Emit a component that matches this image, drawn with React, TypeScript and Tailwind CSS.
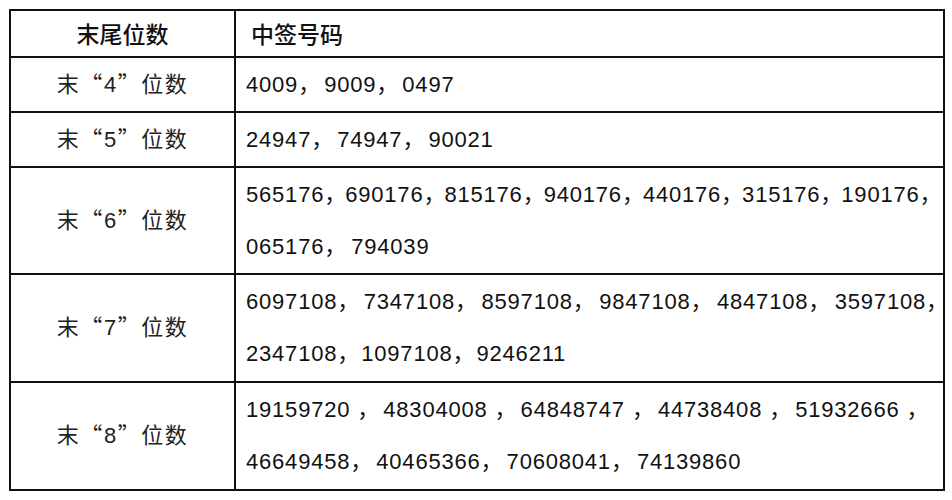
const cjk = "[font-family:'Noto_Sans_CJK_SC',sans-serif]";

type Row = {
  digit: string;
  h: string;
  lines: { nums: string[]; comma: string; trail?: string }[];
};

const rows: Row[] = [
  { digit: "4", h: "h-[55px]", lines: [{ nums: ["4009", "9009", "0497"], comma: "w-[26px]" }] },
  { digit: "5", h: "h-[55px]", lines: [{ nums: ["24947", "74947", "90021"], comma: "w-[26px]" }] },
  {
    digit: "6",
    h: "h-[107px]",
    lines: [
      {
        nums: ["565176", "690176", "815176", "940176", "440176", "315176", "190176"],
        comma: "w-[21px]",
        trail: "w-[12px]",
      },
      { nums: ["065176", "794039"], comma: "w-[27px]" },
    ],
  },
  {
    digit: "7",
    h: "h-[108px]",
    lines: [
      {
        nums: ["6097108", "7347108", "8597108", "9847108", "4847108", "3597108"],
        comma: "w-[26.5px]",
        trail: "w-[12px]",
      },
      { nums: ["2347108", "1097108", "9246211"], comma: "w-[24px]" },
    ],
  },
  {
    digit: "8",
    h: "h-[108px]",
    lines: [
      {
        nums: ["19159720", "48304008", "64848747", "44738408", "51932666"],
        comma: "w-[33px] pl-[7px]",
        trail: "w-[19px] pl-[7px]",
      },
      { nums: ["46649458", "40465366", "70608041", "74139860"], comma: "w-[26px]" },
    ],
  },
];

function Line({ nums, comma, trail }: { nums: string[]; comma: string; trail?: string }) {
  return (
    <div className="h-[52px] whitespace-nowrap leading-[46px]">
      {nums.map((n, i) => {
        const last = i === nums.length - 1;
        if (last && !trail) return <span key={i}>{n}</span>;
        return (
          <span key={i}>
            {n}
            <span className={`inline-block ${last ? trail : comma} ${cjk}`}>，</span>
          </span>
        );
      })}
    </div>
  );
}

export default function App() {
  return (
    <div className="w-[952px] h-[500px] bg-white pl-[9px] pt-[9px] text-[#111] font-['Liberation_Sans','Noto_Sans_CJK_SC',sans-serif]">
      <table className="w-[936px] table-fixed border-collapse border-[2.5px] border-[#111]">
        <colgroup>
          <col className="w-[225px]" />
          <col />
        </colgroup>
        <thead>
          <tr className="h-[47px]">
            <th className={`border-2 border-[#111] text-center text-[23px] font-medium ${cjk}`}>末尾位数</th>
            <th className={`border-2 border-[#111] pl-[15px] text-left text-[23px] font-medium ${cjk}`}>中签号码</th>
          </tr>
        </thead>
        <tbody>
          {rows.map((r) => (
            <tr key={r.digit} className={r.h}>
              <td className="border-2 border-[#111] pb-[3px] text-center text-[22px] leading-[30px] tracking-[1.5px] text-[#222]">
                <span className={cjk}>末“</span>
                {r.digit}
                <span className={cjk}>”位数</span>
              </td>
              <td className="border-2 border-[#111] pl-[10px] text-[22px] tracking-[0.8px]">
                {r.lines.map((l, i) => (
                  <Line key={i} nums={l.nums} comma={l.comma} trail={l.trail} />
                ))}
              </td>
            </tr>
          ))}
        </tbody>
      </table>
    </div>
  );
}
